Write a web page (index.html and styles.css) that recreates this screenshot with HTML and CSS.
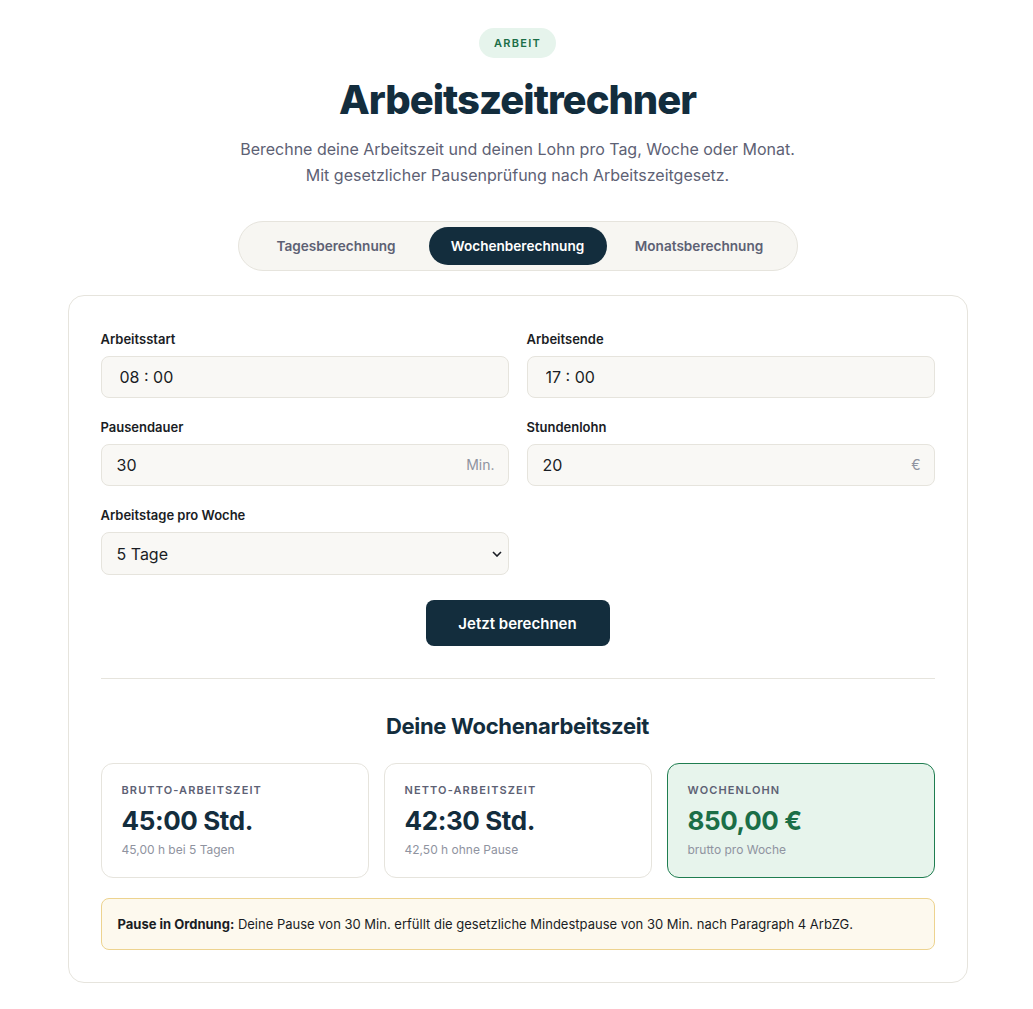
FILE: index.html
```
<!DOCTYPE html>
<html lang="de">

<head>
    <meta charset="UTF-8">
    <meta name="viewport" content="width=device-width, initial-scale=1.0">
    <title>Arbeitszeitrechner</title>
    <link rel="stylesheet" href="styles.css">
</head>

<body>
    <header class="hero">
        <span class="tag">ARBEIT</span>
        <h1>Arbeitszeitrechner</h1>
        <p class="lead">Berechne deine Arbeitszeit und deinen Lohn pro Tag, Woche oder Monat.<br>
            Mit gesetzlicher Pausenprüfung nach Arbeitszeitgesetz.</p>
    </header>

    <nav class="tabs">
        <button class="tab">Tagesberechnung</button>
        <button class="tab active">Wochenberechnung</button>
        <button class="tab">Monatsberechnung</button>
    </nav>

    <main class="card">
        <div class="form-grid">
            <div class="field">
                <label for="start">Arbeitsstart</label>
                <input id="start" class="input time" type="text" value="08 : 00">
            </div>
            <div class="field">
                <label for="end">Arbeitsende</label>
                <input id="end" class="input time" type="text" value="17 : 00">
            </div>
            <div class="field">
                <label for="pause">Pausendauer</label>
                <div class="input-wrap">
                    <input id="pause" class="input" type="text" value="30">
                    <span class="unit">Min.</span>
                </div>
            </div>
            <div class="field">
                <label for="wage">Stundenlohn</label>
                <div class="input-wrap">
                    <input id="wage" class="input" type="text" value="20">
                    <span class="unit">€</span>
                </div>
            </div>
            <div class="field">
                <label for="days">Arbeitstage pro Woche</label>
                <select id="days" class="input select">
                    <option>5 Tage</option>
                </select>
            </div>
        </div>

        <div class="actions">
            <button class="btn-primary">Jetzt berechnen</button>
        </div>

        <hr class="divider">

        <h2>Deine Wochenarbeitszeit</h2>

        <div class="results">
            <div class="result">
                <div class="result-label">BRUTTO-ARBEITSZEIT</div>
                <div class="result-value">45:00 Std.</div>
                <div class="result-sub">45,00 h bei 5 Tagen</div>
            </div>
            <div class="result">
                <div class="result-label">NETTO-ARBEITSZEIT</div>
                <div class="result-value">42:30 Std.</div>
                <div class="result-sub">42,50 h ohne Pause</div>
            </div>
            <div class="result highlight">
                <div class="result-label">WOCHENLOHN</div>
                <div class="result-value">850,00 €</div>
                <div class="result-sub">brutto pro Woche</div>
            </div>
        </div>

        <div class="notice">
            <strong>Pause in Ordnung:</strong> Deine Pause von 30 Min. erfüllt die gesetzliche Mindestpause von 30 Min. nach Paragraph 4 ArbZG.
        </div>
    </main>
</body>

</html>
```

FILE: styles.css
```
body {
    font-family: Inter, "Liberation Sans", sans-serif;
    margin: 0;
    padding: 28px 0 26px 2px;
    background-color: #ffffff;
    color: #132d3d;
}

.hero {
    text-align: center;
}

.tag {
    display: inline-block;
    padding: 0 15px;
    height: 30px;
    line-height: 30px;
    border-radius: 15px;
    background-color: #e6f4ec;
    color: #1b6e47;
    font-size: 11px;
    font-weight: 600;
    letter-spacing: 1.3px;
}

h1 {
    margin: 20px 0 0;
    font-size: 40px;
    line-height: 44px;
    font-weight: 800;
    letter-spacing: -1px;
    color: #132d3d;
}

.lead {
    margin: 14px 0 0;
    font-size: 16px;
    line-height: 26px;
    color: #5d6174;
}

.tabs {
    display: flex;
    width: 548px;
    margin: 33px auto 0;
    padding: 5px;
    border: 1px solid #e6e4dd;
    border-radius: 26px;
    background-color: #f7f6f2;
}

.tab {
    flex: 1;
    height: 38px;
    border: none;
    border-radius: 19px;
    background: transparent;
    font-family: inherit;
    font-size: 13.6px;
    font-weight: 600;
    color: #5d6174;
    cursor: pointer;
}

.tab.active {
    flex: 0 0 178px;
    background-color: #132d3d;
    color: #ffffff;
}

.card {
    width: 834px;
    margin: 24px auto 0;
    padding: 32px;
    border: 1px solid #e6e4dd;
    border-radius: 16px;
    background-color: #ffffff;
}

.form-grid {
    display: grid;
    grid-template-columns: 1fr 1fr;
    column-gap: 18px;
    row-gap: 20px;
    padding-top: 2px;
}

.field label {
    display: block;
    margin-bottom: 8px;
    font-size: 13px;
    line-height: 18px;
    font-weight: 600;
    color: #1a1d24;
}

.input {
    box-sizing: border-box;
    width: 100%;
    height: 42px;
    padding: 0 15px;
    border: 1px solid #e6e4dd;
    border-radius: 8px;
    background-color: #f9f8f5;
    font-family: inherit;
    font-size: 16px;
    color: #1a1d24;
}

.time {
    padding-left: 18px;
}

.select {
    height: 43px;
    appearance: none;
    background-image: url("data:image/svg+xml,%3Csvg xmlns='http://www.w3.org/2000/svg' width='10' height='6' viewBox='0 0 10 6'%3E%3Cpath d='M1 1l4 4 4-4' fill='none' stroke='%231a1d24' stroke-width='1.6'/%3E%3C/svg%3E");
    background-repeat: no-repeat;
    background-position: right 6px center;
}

.input-wrap {
    position: relative;
}

.unit {
    position: absolute;
    right: 14px;
    top: 0;
    line-height: 42px;
    font-size: 14px;
    color: #8f93a0;
}

.actions {
    display: flex;
    justify-content: center;
    margin-top: 25px;
}

.btn-primary {
    width: 184px;
    height: 46px;
    border: none;
    border-radius: 8px;
    background-color: #132d3d;
    color: #ffffff;
    font-family: inherit;
    font-size: 15px;
    font-weight: 600;
    cursor: pointer;
}

.divider {
    margin: 32px 0 0;
    border: none;
    border-top: 1px solid #e6e4dd;
}

h2 {
    margin: 33px 0 0;
    text-align: center;
    font-size: 22px;
    line-height: 28px;
    font-weight: 700;
    letter-spacing: -0.3px;
    color: #132d3d;
}

.results {
    display: grid;
    grid-template-columns: repeat(3, 1fr);
    gap: 15px;
    margin-top: 23px;
}

.result {
    height: 113px;
    padding: 0 20px;
    border: 1px solid #e6e4dd;
    border-radius: 12px;
    background-color: #ffffff;
}

.result-label {
    margin-top: 19px;
    font-size: 11px;
    line-height: 14px;
    font-weight: 600;
    letter-spacing: 1.1px;
    color: #5d6174;
}

.result-value {
    margin-top: 8px;
    font-size: 26px;
    line-height: 32px;
    font-weight: 700;
    letter-spacing: -0.4px;
    color: #132d3d;
}

.result-sub {
    margin-top: 5px;
    font-size: 12px;
    line-height: 16px;
    color: #8f93a0;
}

.highlight {
    border-color: #1f7d50;
    background-color: #e7f4ec;
}

.highlight .result-value {
    color: #1b6e47;
}

.notice {
    margin-top: 20px;
    padding: 15px 16px;
    border: 1px solid #edd38f;
    border-radius: 8px;
    background-color: #fdf9ee;
    font-size: 13px;
    line-height: 20px;
    color: #1a1d24;
}

.notice strong {
    font-weight: 700;
}
```
